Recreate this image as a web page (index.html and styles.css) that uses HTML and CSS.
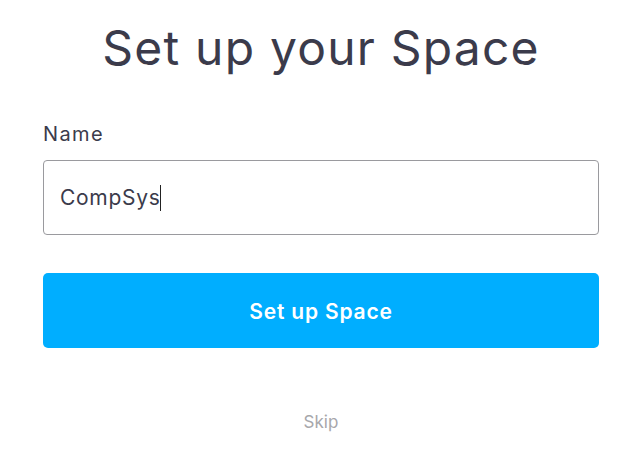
FILE: index.html
```html
<!DOCTYPE html>
<html>
<head>
<meta charset="utf-8">
<link rel="stylesheet" href="styles.css">
</head>
<body>
<main class="page">
  <h1 class="title">Set up your Space</h1>
  <form class="form">
    <label class="label" for="name">Name</label>
    <div class="input"><span class="value">CompSys</span><span class="caret"></span></div>
    <button type="button" class="btn">Set up Space</button>
  </form>
  <a class="skip">Skip</a>
</main>
</body>
</html>
```

FILE: styles.css
```css
html, body { margin: 0; padding: 0; background: #fff; }
body { font-family: Inter, "Noto Sans", sans-serif; color: #3a3a4a; }
.page { width: 556px; margin: 0 0 0 43px; padding-top: 20px; display: flex; flex-direction: column; align-items: stretch; }
.title { margin: 0; text-align: center; font-size: 48px; font-weight: 400; line-height: 56px; color: #3b3b4b; letter-spacing: 1.2px; }
.form { display: flex; flex-direction: column; margin-top: 46px; }
.label { font-size: 20px; line-height: 24px; color: #3b3b4b; letter-spacing: 1.4px; }
.input { margin-top: 14px; height: 73px; border: 1px solid #9a9a9e; border-radius: 4px; display: flex; align-items: center; padding-left: 16px; box-sizing: content-box; }
.value { font-size: 21px; color: #3b3b4b; letter-spacing: 0.7px; }
.caret { width: 1px; height: 26px; background: #222; margin-left: 0; }
.btn { margin-top: 38px; height: 75px; border: 0; border-radius: 5px; background: #00aeff; color: #fff; font-family: Inter, sans-serif; font-size: 21px; font-weight: 600; padding: 2px 0 0; letter-spacing: 0.8px; }
.skip { margin-top: 64px; text-align: center; font-size: 17px; color: #a7a7ab; }
```
